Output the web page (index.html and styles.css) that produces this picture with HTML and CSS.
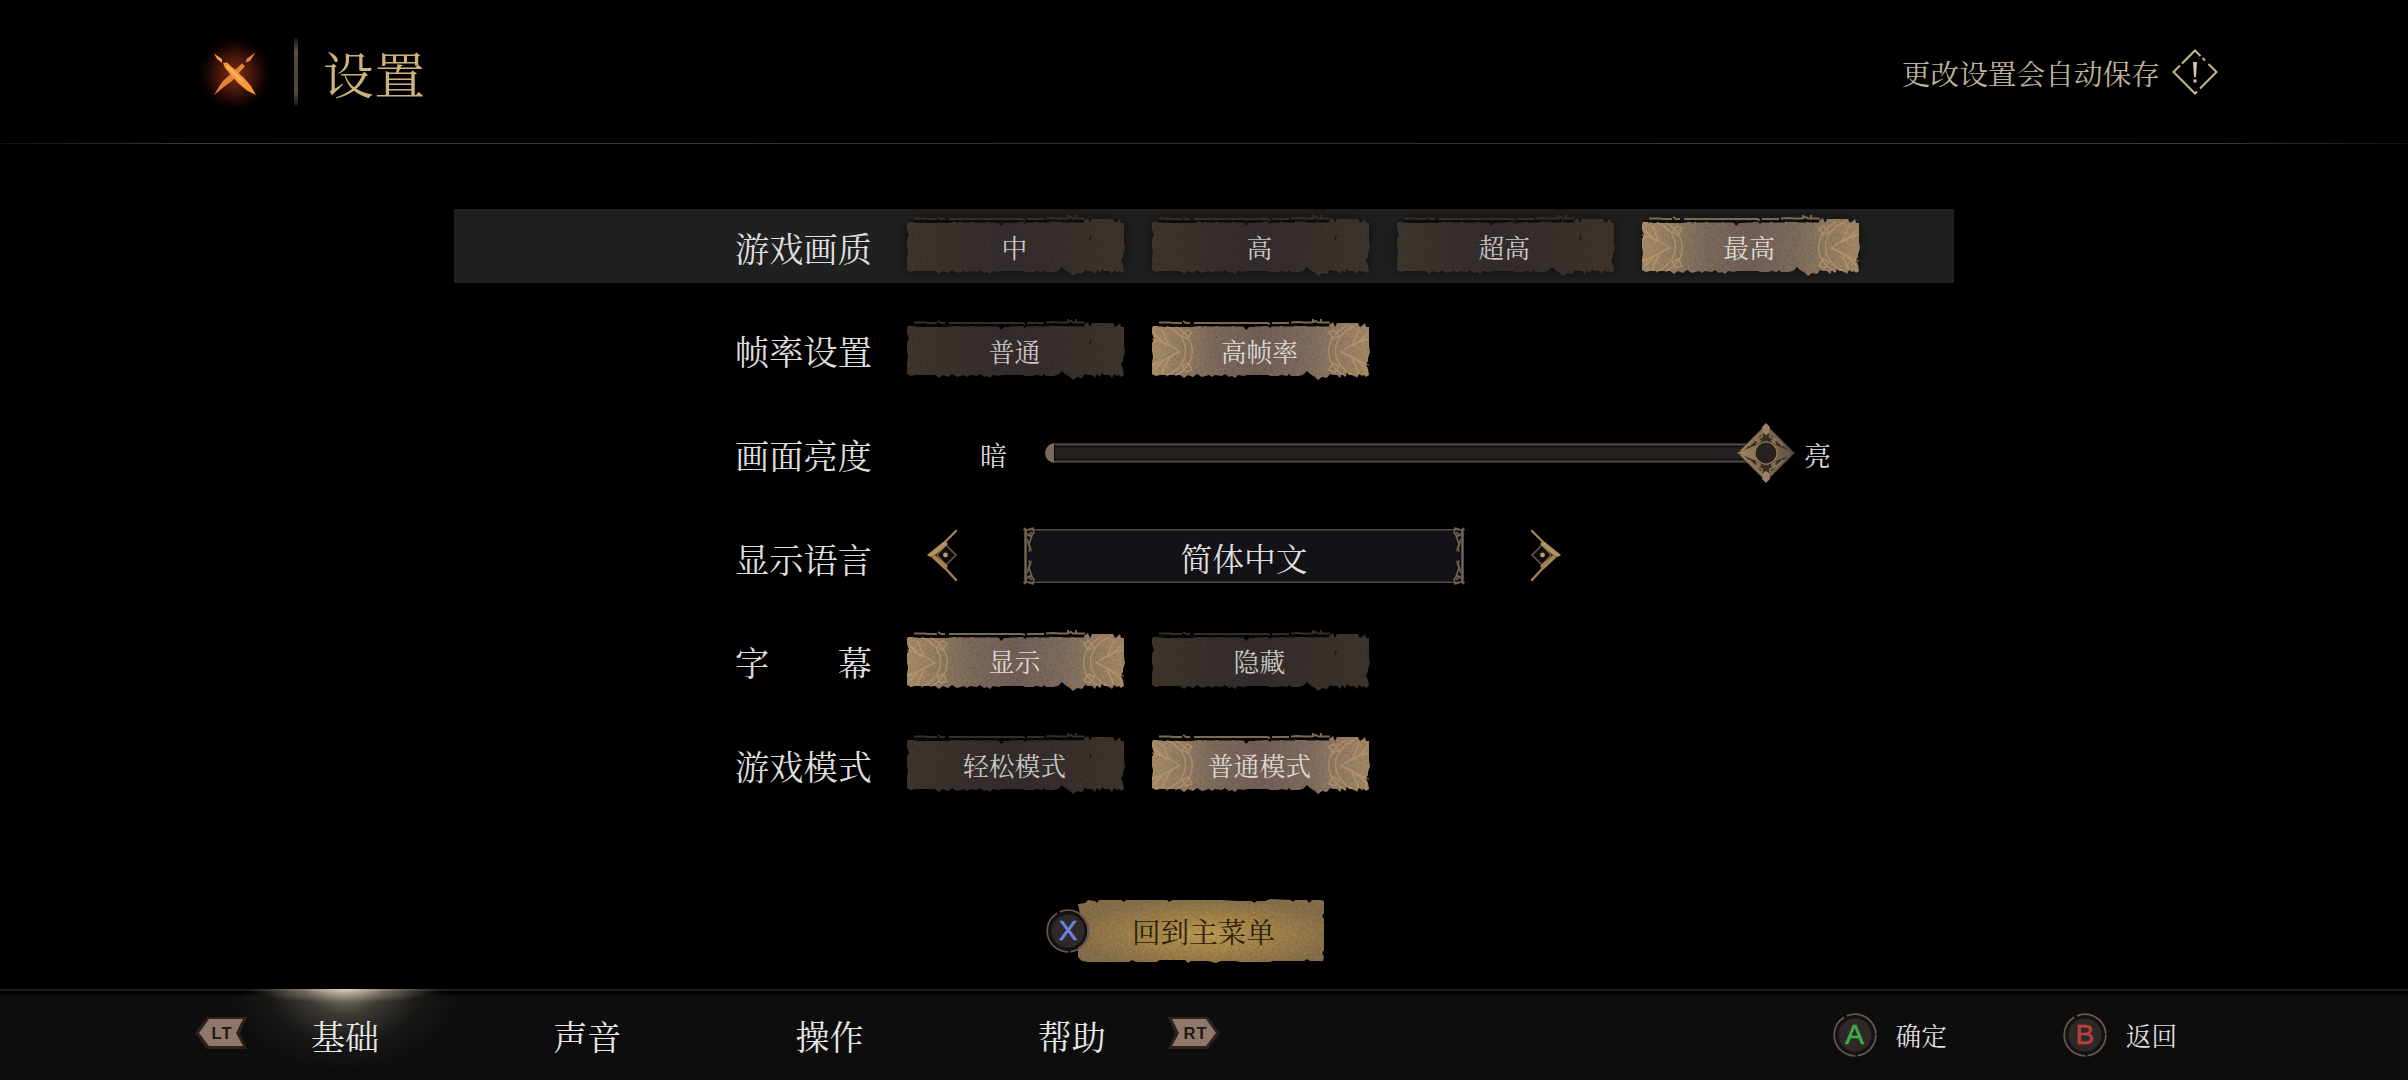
FILE: index.html
```html
<!DOCTYPE html>
<html lang="zh-CN">
<head>
    <meta charset="UTF-8">
    <meta name="viewport" content="width=device-width, initial-scale=1.0">
    <title>设置</title>
    <link rel="stylesheet" href="styles.css">
</head>
<body>
    <!-- 公用图形 -->
    <svg class="defs" aria-hidden="true">
        <defs>
            <linearGradient id="dark" x1="0" x2="1">
                <stop offset="0" stop-color="#3f362e"/>
                <stop offset=".22" stop-color="#39312c"/>
                <stop offset=".45" stop-color="#352d2e"/>
                <stop offset=".7" stop-color="#38302c"/>
                <stop offset="1" stop-color="#3e352d"/>
            </linearGradient>
            <linearGradient id="light" x1="0" x2="1">
                <stop offset="0" stop-color="#aa8f69"/>
                <stop offset=".12" stop-color="#987f64"/>
                <stop offset=".28" stop-color="#7f6c5d"/>
                <stop offset=".5" stop-color="#736158"/>
                <stop offset=".72" stop-color="#816e5f"/>
                <stop offset=".88" stop-color="#987f64"/>
                <stop offset="1" stop-color="#a78b66"/>
            </linearGradient>
            <radialGradient id="gold" cx=".52" cy=".55" r=".55">
                <stop offset="0" stop-color="#c09d54"/>
                <stop offset=".5" stop-color="#a4854a"/>
                <stop offset="1" stop-color="#88704b"/>
            </radialGradient>
            <linearGradient id="metal" x1="0" x2="1">
                <stop offset="0" stop-color="#a1855f"/>
                <stop offset=".5" stop-color="#826b50"/>
                <stop offset="1" stop-color="#5e5046"/>
            </linearGradient>
            <filter id="grain" x="0" y="0" width="1" height="1" color-interpolation-filters="sRGB">
                <feTurbulence type="fractalNoise" baseFrequency=".4" numOctaves="2" seed="4"/>
                <feColorMatrix values="0 0 0 0 0  0 0 0 0 0  0 0 0 0 0  .25 0 0 0 -.09"/>
                <feComposite in2="SourceGraphic" operator="in" result="n"/>
                <feMerge>
                    <feMergeNode in="SourceGraphic"/>
                    <feMergeNode in="n"/>
                </feMerge>
            </filter>
            <path id="plate" d="M0 7 L1 5 H9 L12 6 H40 L43 5 H90 L92 6 L94 9 L97 6 H101 L104 5 H116 L118 7 L120 5 H137 L140 4 L146 5 H176 L178 3 L181 1 L183 6 L185 2 L189 2 H206 L208 6 L211 4 L213 2 L214 6 L217 6 V25 L218 31 L216 37 V40 L214 43 L216 48 L217 54 L214 56 L212 54 L210 55 L207 53 L205 57 L202 54 H197 L195 52 L193 56 L190 53 L188 57 L185 54 H181 L178 53 L175 57 L170 56 L166 59 L163 56 L158 53 L155 50 L151 54 L146 55 H139 L137 53 L135 55 L129 54 L126 55 H118 L116 54 H95 L92 55 L86 54 L83 57 L80 55 L77 56 L73 53 L70 55 L63 54 L60 56 L57 54 L50 56 L45 53 L41 56 L36 54 L32 57 L28 54 H8 L4 55 L0 53 V42 L1 36 L0 30 V22 L2 18 L0 12 Z"/>
            <path id="plate-edge" fill="none" stroke-width="2" d="M7 1.500 H18 L21 2 H30 M31 0 L34 2 H38 M42 2 H115 L118 3 M120 2 H137 M139 1.500 L146 1 L152 1.500 H160 L164 0 L166 1.500 H178 M161 -2 V1 M169 -2 V1"/>
            <path id="plate-cuts" stroke="#0b0a09" stroke-width="2" stroke-dasharray="9 3 14 2 11 4 3 2" d="M6 4.400 H112 M119 4.400 H143 M155 4.400 H177"/>
            <g id="ornament" fill="none" stroke="#c39f78" stroke-width="1.400" opacity=".6">
                <path d="M14 5 C40 15 40 44 14 55 M23 5 C46 18 46 43 23 55 M0 18 C12 20 20 25 28 31 C19 34 11 41 0 44"/>
                <path d="M10 8 L17 25 M10 53 L17 37 M2 13 L15 25 M2 49 L15 37"/>
                <path d="M30 15 L35 9 L40 11 L36 18 Z M30 45 L36 42 L40 49 L34 51 Z"/>
            </g>
            <symbol id="btn-dark" viewBox="0 -3 218 63">
                <g filter="url(#grain)">
                    <use href="#plate" fill="url(#dark)"/>
                </g>
                <use href="#plate-edge" stroke="#352e28"/>
                <use href="#plate-cuts"/>
                <path d="M184 19 L183 23" stroke="#1c1714" stroke-width="1.500"/>
            </symbol>
            <symbol id="btn-light" viewBox="0 -3 218 63">
                <g filter="url(#grain)">
                    <use href="#plate" fill="url(#light)"/>
                </g>
                <use href="#ornament"/>
                <use href="#ornament" transform="translate(217 0) scale(-1 1)"/>
                <use href="#plate-edge" stroke="#7b6a52"/>
                <use href="#plate-cuts"/>
            </symbol>
            <symbol id="arrow" viewBox="0 0 32 54">
                <path d="M10 26 L19 16 L29 26 L19 36 Z" fill="#0f0d0b" stroke="#6e5b42" stroke-width="1.500"/>
                <path d="M0 26 L18 11.500 L21 15 L8 26 L3 28 Z" fill="#b1915e"/>
                <path d="M4 28 L8 26 L21 37 L18 41 Z" fill="#a5824f"/>
                <path d="M19 12 L29 2 M19 40 L29 51" stroke="#a08256" stroke-width="2.400" stroke-linecap="round"/>
                <circle cx="18.500" cy="26" r="2.400" fill="#b5a17e"/>
            </symbol>
            <symbol id="frame-end" viewBox="0 0 14 58">
                <g fill="none" stroke="#736555" stroke-width="1.500">
                    <path d="M2.500 3 V55" stroke-width="2.400"/>
                    <path d="M1 1 L4 3 L10 1 L11 6 L7 9 L2 6 M10 6 L6 17 L8 23 M5 8 L9 5 M4 12 L7 22"/>
                    <path d="M1 57 L4 55 L10 57 L11 52 L7 49 L2 52 M10 52 L6 41 L8 35 M5 50 L9 53 M4 46 L7 36"/>
                </g>
                <circle cx="7" cy="23" r="1.800" fill="#5f5345"/>
                <circle cx="7" cy="35" r="1.800" fill="#5f5345"/>
            </symbol>
            <symbol id="pad-ring" viewBox="0 0 44 44">
                <circle cx="22" cy="22" r="18.500" fill="#2e2928"/>
                <circle cx="22" cy="22" r="18" fill="none" stroke="#151211" stroke-width="3"/>
                <circle cx="22" cy="22" r="20.800" fill="none" stroke="#66574e" stroke-width="1.800" stroke-dasharray="30 2 54 3 40 1.700"/>
            </symbol>
        </defs>
    </svg>

    <!-- 顶部标题 -->
    <header class="header">
        <button class="close" aria-label="关闭">
            <svg width="76" height="76" viewBox="0 0 76 76">
                <defs>
                    <radialGradient id="glow">
                        <stop offset="0" stop-color="#a83c1a" stop-opacity=".75"/>
                        <stop offset=".45" stop-color="#702410" stop-opacity=".65"/>
                        <stop offset=".75" stop-color="#43140a" stop-opacity=".4"/>
                        <stop offset="1" stop-color="#1a0502" stop-opacity="0"/>
                    </radialGradient>
                </defs>
                <circle cx="38" cy="38" r="37" fill="url(#glow)"/>
                <path d="M58.500 16.500 L50 22.500 L48.500 26.500 L53 25 Z M17 59 L23 49 L26 45 L45 27.500 L48 30 L35 45 L28 50 Z" fill="#e2853a"/>
                <path d="M17 17.500 L20 23 L25 27 L25 23 Z M26 27 L30 26.500 L47 42 L54 50 L59 59 L50 54.500 L41 47 L28 32 Z" fill="#fb963b"/>
                <path d="M30 30 L45 45" stroke="#ffb75c" stroke-width="2"/>
            </svg>
        </button>
        <span class="divider"></span>
        <h1>设置</h1>
        <p class="notice">更改设置会自动保存</p>
        <svg class="notice-icon" width="46" height="46" viewBox="0 0 46 46">
            <path d="M8 16.500 L1.500 23 L23 44.500 L25 42.500 M28 39.500 L44.500 23 L36.500 15 M33 11.500 L30.500 9 M28.500 7 L23 1.500 L10 14.500" fill="none" stroke="#cbb98d" stroke-width="2"/>
            <path d="M21 13 H25 L24 28 H22 Z M21.500 30.500 H24.500 V33.500 H21.500 Z" fill="#d8c6a2"/>
        </svg>
    </header>

    <!-- 设置项 -->
    <main class="content">
        <div class="settings">
            <div class="row selected">
                <span class="label">游戏画质</span>
                <div class="options">
                    <button class="option"><svg><use href="#btn-dark"/></svg><span>中</span></button>
                    <button class="option"><svg><use href="#btn-dark"/></svg><span>高</span></button>
                    <button class="option"><svg><use href="#btn-dark"/></svg><span>超高</span></button>
                    <button class="option active"><svg><use href="#btn-light"/></svg><span>最高</span></button>
                </div>
            </div>
            <div class="row">
                <span class="label">帧率设置</span>
                <div class="options">
                    <button class="option"><svg><use href="#btn-dark"/></svg><span>普通</span></button>
                    <button class="option active"><svg><use href="#btn-light"/></svg><span>高帧率</span></button>
                </div>
            </div>
            <div class="row">
                <span class="label">画面亮度</span>
                <div class="slider">
                    <span class="slider-text">暗</span>
                    <div class="track">
                        <svg class="knob" width="60" height="60" viewBox="0 0 60 60">
                            <path d="M30 1 L59 30 L30 59 L1 30 Z" fill="#3a2e24"/>
                            <path d="M1 30 L18 23 L30 18 L42 23 L59 30 L42 37 L30 42 L18 37 Z" fill="url(#metal)"/>
                            <path d="M4 28 L26 6 L28 9 L7 28 Z M56 28 L34 6 L32 9 L53 28 Z M4 32 L26 54 L28 51 L7 32 Z M56 32 L34 54 L32 51 L53 32 Z" fill="url(#metal)"/>
                            <path d="M30 0 L34 4 L33 10 L30 12 L27 10 L26 4 Z M30 60 L34 56 L33 50 L30 48 L27 50 L26 56 Z" fill="#9c8261"/>
                            <g fill="none" stroke="#857053" stroke-width="1.800">
                                <path d="M13 23 L19 17 L23 19 L20 21 M26 11 V14 L21 16 L25 18 M47 23 L41 17 L37 19 L40 21 M34 11 V14 L39 16 L35 18"/>
                                <path d="M13 37 L19 43 L23 41 L20 39 M26 49 V46 L21 44 L25 42 M47 37 L41 43 L37 41 L40 39 M34 49 V46 L39 44 L35 42"/>
                            </g>
                            <circle cx="30" cy="30" r="10.500" fill="#28211e" stroke="#1c1612" stroke-width="1"/>
                            <circle cx="30" cy="30" r="11" fill="none" stroke="#8f7957" stroke-width="1.200"/>
                        </svg>
                    </div>
                    <span class="slider-text">亮</span>
                </div>
            </div>
            <div class="row">
                <span class="label">显示语言</span>
                <div class="picker">
                    <svg class="arrow" width="32" height="54"><use href="#arrow"/></svg>
                    <div class="picker-box">
                        <svg width="14" height="58"><use href="#frame-end"/></svg>
                        <span>简体中文</span>
                        <svg class="flip" width="14" height="58"><use href="#frame-end"/></svg>
                    </div>
                    <svg class="arrow flip" width="32" height="54"><use href="#arrow"/></svg>
                </div>
            </div>
            <div class="row">
                <span class="label">字幕</span>
                <div class="options">
                    <button class="option active"><svg><use href="#btn-light"/></svg><span>显示</span></button>
                    <button class="option"><svg><use href="#btn-dark"/></svg><span>隐藏</span></button>
                </div>
            </div>
            <div class="row">
                <span class="label">游戏模式</span>
                <div class="options">
                    <button class="option"><svg><use href="#btn-dark"/></svg><span>轻松模式</span></button>
                    <button class="option active"><svg><use href="#btn-light"/></svg><span>普通模式</span></button>
                </div>
            </div>
        </div>

        <button class="back-menu">
            <svg class="back-bg" viewBox="0 0 246 64">
                <path filter="url(#grain)" fill="url(#gold)" d="M0 5 L7 4 L10 1 L17 2 L19 4 L21 1 H43 L46 3 L48 1 H89 L91 3 L94 1 H143 L160 2 L174 2 L176 4 L179 2 H187 L192 0 L213 1 L215 3 L217 1 H229 L231 4 L234 1 H243 L246 2 V14 L244 17 L246 20 V51 L244 54 L246 57 L245 62 H232 L229 60 L226 62 H195 L192 63 H162 L158 62 H143 L138 64 L130 62 H113 L110 64 L107 61 H82 L78 63 H58 L54 61 L51 63 H10 L4 62 L0 58 V47 L3 40 L8 32 L3 20 Z"/>
            </svg>
            <span class="pad-key key-x"><svg><use href="#pad-ring"/></svg><b>X</b></span>
            <span class="back-text">回到主菜单</span>
        </button>
    </main>

    <!-- 底部导航 -->
    <footer class="footer">
        <svg class="trigger" width="54" height="36" viewBox="0 0 54 36">
            <path d="M1 18 L13 2 H53 L46 18 L53 34 H13 Z" fill="#2c211d"/>
            <path d="M5 18 L15 4 H49 L42 18 L49 31 H15 Z" fill="#8f776a"/>
            <text x="28" y="23.500">LT</text>
        </svg>
        <nav class="tabs">
            <a class="tab active">基础</a>
            <a class="tab">声音</a>
            <a class="tab">操作</a>
            <a class="tab">帮助</a>
        </nav>
        <svg class="trigger" width="54" height="36" viewBox="0 0 54 36">
            <path d="M53 18 L41 2 H1 L8 18 L1 34 H41 Z" fill="#2c211d"/>
            <path d="M49 18 L39 4 H5 L12 18 L5 31 H39 Z" fill="#8f776a"/>
            <text x="28.500" y="23.500">RT</text>
        </svg>
        <div class="hints">
            <span class="hint"><span class="pad-key key-a"><svg><use href="#pad-ring"/></svg><b>A</b></span><span class="hint-text">确定</span></span>
            <span class="hint"><span class="pad-key key-b"><svg><use href="#pad-ring"/></svg><b>B</b></span><span class="hint-text">返回</span></span>
        </div>
    </footer>
</body>
</html>
```
FILE: styles.css
```css
* {
    box-sizing: border-box;
    margin: 0;
    padding: 0;
}

body {
    width: 2408px;
    height: 1080px;
    display: flex;
    flex-direction: column;
    overflow: hidden;
    background: #000;
    color: #dedede;
    font-family: "Noto Serif CJK SC", "Noto Sans CJK SC", serif;
    font-weight: 400;
}

button {
    background: none;
    border: none;
    color: inherit;
    font: inherit;
    cursor: pointer;
}

svg {
    display: block;
}

.defs {
    position: absolute;
    width: 0;
    height: 0;
}

.flip {
    transform: scaleX(-1);
}

/* 顶部标题 */
.header {
    height: 144px;
    flex: none;
    display: flex;
    align-items: center;
    padding: 4px 190px 0 197px;
    border-bottom: 1px solid;
    border-image: linear-gradient(90deg, #111, #383838 8%, #303030 50%, #383838 92%, #111) 1;
}

.divider {
    width: 4px;
    height: 68px;
    margin: -4px 25px 0 21px;
    background: linear-gradient(#15120f, #5a5045 20%, #4a4239 50%, #51483e 80%, #15120f);
}

.header h1 {
    margin-top: -2px;
    font-size: 50.5px;
    font-weight: 400;
    line-height: 1;
    letter-spacing: 1px;
    color: #cdb27c;
}

.notice {
    margin: -1px 0 0 auto;
    font-size: 28.7px;
    line-height: 1;
    color: #bdb39c;
}

.notice-icon {
    margin: -4px 0 0 12px;
}

/* 设置列表 */
.content {
    flex: 1;
    padding-top: 64.6px;
}

.settings {
    width: 1500px;
    margin: 0 auto;
    display: flex;
    flex-direction: column;
    gap: 29px;
}

.row {
    height: 74.6px;
    display: flex;
    align-items: center;
    padding-left: 281px;
}

.row.selected {
    background: #202020;
}

.label {
    width: 137px;
    margin: 4px 35px 0 0;
    font-size: 34.2px;
    line-height: 1;
    white-space: nowrap;
    text-align-last: justify;
}

.options {
    display: flex;
    gap: 26.9px;
}

/* 选项按钮 */
.option {
    width: 218px;
    height: 63px;
    display: grid;
    place-items: center;
    font-size: 25.8px;
    line-height: 1;
    color: #c9c5c3;
}

.option svg,
.option span {
    grid-area: 1 / 1;
}

.option svg {
    width: 218px;
    height: 63px;
}

.option span {
    position: relative;
    margin: 2px 3px 0 0;
}

.option.active {
    color: #dcd6d2;
}

.selected .option svg {
    filter: drop-shadow(0 0 6px #0c0c0c);
}

/* 亮度滑块 */
.slider {
    display: flex;
    align-items: center;
    padding-left: 73px;
}

.slider-text {
    margin-top: 3px;
    font-size: 27px;
    line-height: 1;
}

.track {
    width: 722px;
    height: 20px;
    margin: -1px 37px 0 38px;
    display: flex;
    align-items: center;
    justify-content: flex-end;
    border-radius: 10px 0 0 10px;
    background:
        linear-gradient(#000, #000) 9px 2px / 1px 16px no-repeat,
        linear-gradient(90deg, #7b6959 9px, transparent 9px),
        linear-gradient(#0d0b0a, #5d5147 1px, #4b4139 2px, #110f0e 3px, #252221 6px, #252221 14px, #110f0e 17px, #4b4139 18px, #5d5147 19px, #0d0b0a);
}

.knob {
    flex: none;
    margin-right: -29px;
}

/* 语言选择 */
.picker {
    display: flex;
    align-items: center;
    padding-left: 20px;
    margin-top: -2px;
}

.picker-box {
    width: 442px;
    height: 58px;
    margin: 0 64px;
    display: flex;
    align-items: center;
    justify-content: space-between;
    background: linear-gradient(#131216, #131216) 3px 2px / 436px 54px no-repeat;
    box-shadow: inset 0 2px #000, inset 0 3.5px #514a41, inset 0 -2px #000, inset 0 -3.5px #514a41;
    font-size: 31.8px;
    line-height: 1;
}

.picker-box span {
    margin-top: 4px;
}

/* 回到主菜单 */
.back-menu {
    width: 246px;
    height: 64px;
    margin: 98px 0 0 1078px;
    display: grid;
    align-items: center;
}

.back-bg,
.back-text,
.key-x {
    grid-area: 1 / 1;
}

.back-text {
    margin: 1px 0 0 5px;
    font-size: 28.6px;
    line-height: 1;
    color: #2c200b;
}

.key-x {
    margin-left: -32px;
}

.pad-key {
    width: 44px;
    height: 44px;
    display: grid;
    place-items: center;
    font-family: "Liberation Sans", Arial, sans-serif;
    line-height: 1;
}

.pad-key svg,
.pad-key b {
    grid-area: 1 / 1;
}

.pad-key svg {
    width: 44px;
    height: 44px;
}

.pad-key b {
    font-size: 28px;
    font-weight: normal;
    -webkit-text-stroke: .6px;
}

.key-x b {
    color: #6c86dd;
}

.key-a b {
    color: #3fae49;
}

.key-b b {
    color: #b8423b;
}

/* 底部导航 */
.footer {
    height: 91px;
    flex: none;
    display: flex;
    align-items: center;
    padding: 0 231px 0 194px;
    background: linear-gradient(#191919 2px, #000 2px, #000 5px, #0d0d0d 6px);
}

.trigger {
    margin-top: -3px;
}

.trigger text {
    font: bold 16.5px "Liberation Sans", Arial, sans-serif;
    letter-spacing: 1px;
    text-anchor: middle;
    fill: #211815;
}

.tabs {
    display: flex;
    height: 100%;
    margin: 0 -26px 0 -24px;
}

.tab {
    width: 242.2px;
    display: grid;
    place-items: center;
    padding-top: 3px;
    font-size: 34px;
    line-height: 1;
    color: #e6e6e6;
}

.tab.active {
    background:
        radial-gradient(ellipse 95px 14px at 50% 0, rgba(240, 225, 200, .8), rgba(240, 225, 200, .3) 50%, transparent),
        radial-gradient(ellipse 118px 82px at 50% 0, rgba(185, 175, 155, .72), rgba(135, 128, 113, .38) 32%, rgba(90, 85, 76, .15) 65%, transparent);
}

.hints {
    display: flex;
    gap: 116px;
    margin-left: auto;
}

.hint {
    display: flex;
    align-items: center;
    gap: 19px;
    font-size: 25.6px;
    line-height: 1;
}

.hint-text {
    margin-top: 3px;
}
```
